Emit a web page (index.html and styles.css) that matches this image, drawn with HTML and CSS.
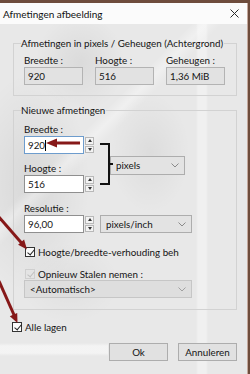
FILE: index.html
```html
<!DOCTYPE html>
<html>
<head>
<meta charset="utf-8">
<title>Afmetingen afbeelding</title>
<link rel="stylesheet" href="styles.css">
</head>
<body>
<div class="screen">
    <div class="dialog">
        <div class="titlebar">
            <span class="title">Afmetingen afbeelding</span>
            <svg class="close" width="9" height="9" viewBox="0 0 9 9"><path d="M0.5 0.5L8.5 8.5M8.5 0.5L0.5 8.5" stroke="#2b2b2b" stroke-width="1" fill="none"/></svg>
        </div>
        <div class="content">
            <fieldset class="group group-info">
                <legend>Afmetingen in pixels / Geheugen (Achtergrond)</legend>
                <div class="info-row">
                    <div class="cell">
                        <div class="lbl">Breedte :</div>
                        <div class="field ro">920</div>
                    </div>
                    <div class="cell">
                        <div class="lbl">Hoogte :</div>
                        <div class="field ro">516</div>
                    </div>
                    <div class="cell">
                        <div class="lbl">Geheugen :</div>
                        <div class="field ro">1,36 MiB</div>
                    </div>
                </div>
            </fieldset>

            <fieldset class="group group-new">
                <legend>Nieuwe afmetingen</legend>
                <div class="inner">
                    <div class="dims">
                        <div class="lbl lbl-w">Breedte :</div>
                        <div class="spin spin-w">
                            <div class="field edit focus">920<i class="caret"></i></div>
                            <div class="spin-btns"><span class="up"></span><span class="down"></span></div>
                        </div>
                        <div class="lbl lbl-h">Hoogte :</div>
                        <div class="spin spin-h">
                            <div class="field edit">516</div>
                            <div class="spin-btns"><span class="up"></span><span class="down"></span></div>
                        </div>
                        <div class="bracket"></div>
                        <div class="select sel-unit">pixels<svg class="chev" width="8" height="5" viewBox="0 0 8 5"><path d="M0.5 0.5L4 4L7.5 0.5" stroke="#8a8a8a" fill="none"/></svg></div>
                    </div>

                    <div class="res">
                        <div class="res-col">
                            <div class="lbl">Resolutie :</div>
                            <div class="spin">
                                <div class="field edit">96,00</div>
                                <div class="spin-btns"><span class="up"></span><span class="down"></span></div>
                            </div>
                        </div>
                        <div class="select sel-res">pixels/inch<svg class="chev" width="8" height="5" viewBox="0 0 8 5"><path d="M0.5 0.5L4 4L7.5 0.5" stroke="#8a8a8a" fill="none"/></svg></div>
                    </div>

                    <div class="check check-ratio">
                        <span class="box on"></span>
                        <span class="check-text">Hoogte/breedte-verhouding behouden</span>
                    </div>
                    <div class="check check-resample off">
                        <span class="box on"></span>
                        <span class="check-text">Opnieuw Stalen nemen :</span>
                    </div>
                    <div class="select sel-auto disabled">&lt;Automatisch&gt;<svg class="chev" width="8" height="5" viewBox="0 0 8 5"><path d="M0.5 0.5L4 4L7.5 0.5" stroke="#a0a0a0" fill="none"/></svg></div>
                </div>
            </fieldset>

            <div class="check check-layers">
                <span class="box on"></span>
                <span class="check-text">Alle lagen</span>
            </div>

            <div class="buttons">
                <div class="btn">Ok</div>
                <div class="btn">Annuleren</div>
            </div>
        </div>
    </div>

    <svg class="arrows" width="250" height="374" viewBox="0 0 250 374">
        <g fill="#861818" stroke="#861818">
            <line x1="80" y1="143" x2="55" y2="143" stroke-width="3"/>
            <polygon points="46,143 57,138.5 57,147.5" stroke="none"/>
            <line x1="-2" y1="216" x2="22" y2="243.5" stroke-width="3"/>
            <polygon points="27,249.5 18.1,244.8 24.1,239.6" stroke="none"/>
            <line x1="-1" y1="281" x2="14.5" y2="316" stroke-width="3"/>
            <polygon points="17.5,323 9.8,316.3 17.2,313.1" stroke="none"/>
        </g>
    </svg>
</div>
</body>
</html>
```

FILE: styles.css
```css
* {
    margin: 0;
    padding: 0;
    box-sizing: border-box;
}

body {
    width: 250px;
    height: 374px;
    overflow: hidden;
    background: #6e4c3c;
    font-family: Lato, "Noto Sans", sans-serif;
    font-size: 9.8px;
    color: #141414;
}

.screen {
    position: relative;
    height: 374px;
    padding-top: 3px;
    padding-right: 2px;
}

.dialog {
    height: 371px;
    border-right: 1px solid #c4a89c;
    background:
        linear-gradient(180deg, rgba(255,255,255,0) 340px, rgba(255,255,255,0.5) 343px, rgba(255,255,255,0.5) 350px, rgba(255,255,255,0) 353px) 0 0 / 108px 100% no-repeat,
        linear-gradient(90deg, rgba(255,255,255,0) 196px, rgba(255,255,255,0.35) 198px, rgba(255,255,255,0.35) 206px, rgba(255,255,255,0) 208px),
        linear-gradient(135deg, rgba(255,255,255,0) 150px, rgba(255,255,255,0.35) 160px, rgba(255,255,255,0) 172px),
        radial-gradient(ellipse 60px 110px at 30px 180px, rgba(0,0,0,0.07), rgba(0,0,0,0)),
        radial-gradient(ellipse 45px 50px at 80px 60px, rgba(0,0,0,0.06), rgba(0,0,0,0)),
        radial-gradient(ellipse 40px 60px at 150px 150px, rgba(0,0,0,0.05), rgba(0,0,0,0)),
        radial-gradient(ellipse 50px 40px at 70px 280px, rgba(0,0,0,0.04), rgba(0,0,0,0)),
        #e8e8e8;
}

.titlebar {
    height: 21px;
    background: #fbfbfb;
    display: flex;
    align-items: center;
    justify-content: space-between;
    padding: 0 8px 0 3px;
    font-size: 10px;
    color: #111;
}

.content {
    padding: 12px 10px 0 13px;
}

.group {
    border: 1px solid #d2d2d2;
    padding: 0 0 10px 7px;
}

.group legend {
    line-height: 14px;
    padding: 0 1px 0 0;
}

.lbl {
    line-height: 13px;
    height: 13px;
}

.field {
    height: 18px;
    line-height: 16px;
    padding: 0 3px;
    border: 1px solid #b3b3b3;
}

.field.ro {
    background: #e2e2e2;
}

.info-row {
    display: grid;
    grid-template-columns: 59px 59px 59px;
    column-gap: 12px;
    padding: 4px 0 0 3px;
}

.group-new {
    margin-top: 7px;
    padding-bottom: 11px;
}

.inner {
    padding: 6px 0 0 3px;
}

.dims {
    display: grid;
    grid-template-columns: 70px 16px 75px;
    grid-template-rows: 13px 18px 8px 13px 18px;
}

.lbl-w { grid-row: 1; grid-column: 1; }
.spin-w { grid-row: 2; grid-column: 1; }
.lbl-h { grid-row: 4; grid-column: 1; }
.spin-h { grid-row: 5; grid-column: 1; }

.spin {
    display: flex;
    height: 18px;
}

.spin .field {
    width: 60px;
    background: #fff;
    border-color: #8f8f8f;
}

.spin .field.focus {
    border-color: #6d9ccd;
}

.caret {
    display: inline-block;
    width: 1px;
    height: 11px;
    background: #000;
    vertical-align: -2px;
}

.spin-btns {
    width: 10px;
    display: flex;
    flex-direction: column;
    gap: 1px;
    padding: 1px 0 1px 1px;
}

.spin-btns span {
    flex: 1;
    background: #f3f3f3;
    border: 1px solid #b8b8b8;
    display: flex;
    align-items: center;
    justify-content: center;
}

.spin-btns .up::after {
    content: "";
    border-left: 2.5px solid transparent;
    border-right: 2.5px solid transparent;
    border-bottom: 3px solid #333;
}

.spin-btns .down::after {
    content: "";
    border-left: 2.5px solid transparent;
    border-right: 2.5px solid transparent;
    border-top: 3px solid #333;
}

.bracket {
    grid-column: 2;
    grid-row: 2 / 6;
    margin: 7px 0 8px 6px;
    width: 10px;
    border: 2px solid #111;
    border-left: none;
    position: relative;
}

.bracket::after {
    content: "";
    position: absolute;
    right: -5px;
    top: 50%;
    width: 4px;
    height: 2px;
    margin-top: -1px;
    background: #111;
}

.select {
    height: 19px;
    border: 1px solid #adadad;
    background: #e3e3e3;
    display: flex;
    align-items: center;
    justify-content: space-between;
    padding: 0 5px;
}

.sel-unit {
    grid-column: 3;
    grid-row: 2 / 6;
    align-self: center;
    margin-top: 1px;
}

.res {
    display: flex;
    align-items: flex-end;
    margin-top: 9px;
    gap: 6px;
}

.res-col {
    width: 70px;
}

.sel-res {
    width: 92px;
    height: 18px;
}

.check {
    display: flex;
    align-items: center;
    height: 13px;
    gap: 3px;
    padding-left: 1px;
}

.check-ratio {
    margin-top: 12px;
}

.check-ratio .check-text {
    width: 141px;
    overflow: hidden;
    white-space: nowrap;
}

.check-resample {
    margin-top: 9px;
}

.box {
    width: 10px;
    height: 10px;
    border: 1px solid #333;
    background: #fbfbfb;
    position: relative;
}

.box.on::after {
    content: "";
    position: absolute;
    left: 2.5px;
    top: 0;
    width: 3px;
    height: 6px;
    border: solid #222;
    border-width: 0 1.3px 1.3px 0;
    transform: rotate(40deg);
}

.check.off .box {
    border-color: #cfcfcf;
    background: transparent;
}

.check.off .box.on::after {
    border-color: #c0c0c0;
}

.sel-auto {
    width: 168px;
    height: 18px;
}

.select.disabled {
    background: #dedede;
    border-color: #c6c6c6;
}

.check-layers {
    margin-top: 10px;
    margin-left: -2px;
}

.buttons {
    display: flex;
    justify-content: flex-end;
    gap: 10px;
    margin-top: 10px;
}

.btn {
    width: 59px;
    height: 18px;
    line-height: 16px;
    text-align: center;
    border: 1px solid #adadad;
    background: #e1e1e1;
}

.arrows {
    position: absolute;
    left: 0;
    top: 0;
    pointer-events: none;
}
```
